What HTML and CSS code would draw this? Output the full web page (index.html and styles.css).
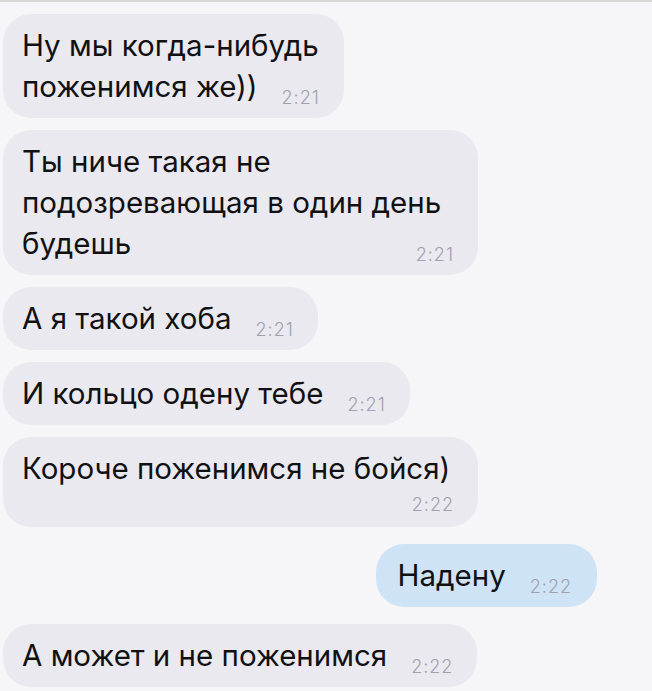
FILE: index.html
```html
<!DOCTYPE html>
<html lang="ru">
<head>
<meta charset="utf-8">
<title>Чат</title>
<link rel="stylesheet" href="styles.css">
</head>
<body>
<div class="chat">
  <div class="msg in">Ну мы когда-нибудь<br>поженимся же))<span class="time">2:21</span></div>
  <div class="msg in wide">Ты ниче такая не<br>подозревающая в один день<br>будешь<span class="time">2:21</span></div>
  <div class="msg in">А я такой хоба<span class="time">2:21</span></div>
  <div class="msg in">И кольцо одену тебе<span class="time">2:21</span></div>
  <div class="msg in wide">Короче поженимся не бойся)<span class="time below">2:22</span></div>
  <div class="msg out">Надену<span class="time">2:22</span></div>
  <div class="msg in">А может и не поженимся<span class="time">2:22</span></div>
</div>
</body>
</html>
```

FILE: styles.css
```css
html, body {
  margin: 0;
  padding: 0;
  background: #f6f6f8;
}

body {
  border-top: 2px solid #d9d8d6;
  height: 689px;
  overflow: hidden;
}

.chat {
  display: flex;
  flex-direction: column;
  align-items: flex-start;
  gap: 12px;
  padding: 12px 0 0 3px;
  font-family: Inter, "Liberation Sans", Arial, sans-serif;
}

.msg {
  max-width: 500px;
  box-sizing: border-box;
  padding: 11px 24px 11px 19px;
  border-radius: 28px;
  background: #e9e9ef;
  color: #111114;
  font-size: 29.5px;
  line-height: 41px;
  white-space: nowrap;
}

.msg.wide {
  width: 475px;
}

.msg.out {
  align-self: flex-end;
  margin: 5px 55px 5px 0;
  padding-left: 22px;
  padding-right: 25px;
  background: #cfe3f6;
}

.time {
  float: right;
  margin: 23px 0 0 24px;
  font-family: Inter, "Liberation Sans", Arial, sans-serif;
  font-weight: 300;
  font-size: 18px;
  line-height: 18px;
  letter-spacing: 1px;
  color: #a0a0ae;
}

.time.below {
  float: none;
  display: block;
  text-align: right;
  margin: 4px 0 0 0;
  line-height: 23px;
}
```
